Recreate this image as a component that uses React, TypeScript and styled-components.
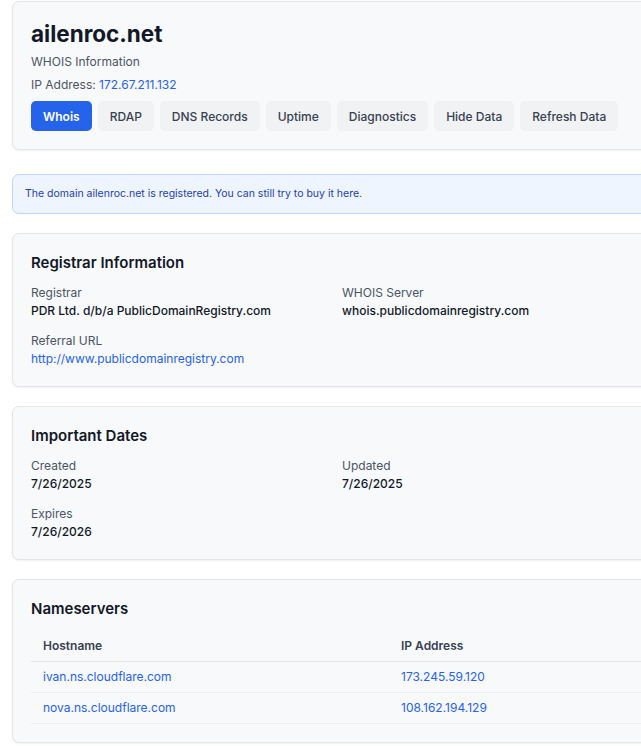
import React from "react";
import styled, { createGlobalStyle } from "styled-components";

const GlobalStyle = createGlobalStyle`
  html, body {
    margin: 0;
    padding: 0;
    background: #ffffff;
    overflow: hidden;
  }
  body {
    font-family: Inter, "Noto Sans", sans-serif;
    color: #111827;
  }
  * {
    box-sizing: border-box;
  }
`;

const StPage = styled.div`
  padding: 1px 0 0 12px;
  width: 700px;
`;

const StCard = styled.section<{ $gap?: number }>`
  width: 660px;
  padding: 18px;
  background: #f8f9fb;
  border: 1px solid #e3e5e9;
  border-radius: 7px;
  box-shadow: 0 1px 2px rgba(16, 24, 40, 0.06);
  margin-bottom: ${({ $gap }) => $gap ?? 19}px;
`;

const StDomain = styled.h1`
  margin: 0;
  font-size: 22.5px;
  line-height: 28px;
  font-weight: 700;
  color: #111827;
`;

const StSub = styled.p`
  margin: 4px 0 0;
  font-size: 12px;
  line-height: 20px;
  color: #4b5563;
`;

const StIpLine = styled.p`
  margin: 3px 0 0;
  font-size: 12px;
  line-height: 20px;
  color: #4b5563;
`;

const StLink = styled.a<{ $plain?: boolean }>`
  color: #2563eb;
  text-decoration: none;
  font-weight: ${({ $plain }) => ($plain ? 400 : "inherit")};
`;

const StTabs = styled.div`
  display: flex;
  gap: 6px;
  margin-top: 6px;
`;

const StTab = styled.button<{ $active?: boolean }>`
  height: 30px;
  padding: 0 12px;
  border: none;
  border-radius: 5px;
  font-family: inherit;
  font-size: 12px;
  font-weight: ${({ $active }) => ($active ? 600 : 500)};
  background: ${({ $active }) => ($active ? "#2563eb" : "#f1f2f4")};
  color: ${({ $active }) => ($active ? "#ffffff" : "#374151")};
  cursor: pointer;
`;

const StAlert = styled.div`
  width: 660px;
  padding: 11px 12px;
  margin-bottom: 19px;
  background: #eef5ff;
  border: 1px solid #bcd7fd;
  border-radius: 7px;
  font-size: 10.5px;
  line-height: 16px;
  color: #1e40af;
`;

const StCardTitle = styled.h2`
  margin: 0 0 10px;
  font-size: 15px;
  line-height: 22px;
  font-weight: 600;
  color: #111827;
`;

const StGrid = styled.dl`
  display: grid;
  grid-template-columns: 1fr 1fr;
  row-gap: 12px;
  margin: 0;
`;

const StField = styled.div`
  display: flex;
  flex-direction: column;
`;

const StLabel = styled.dt`
  font-size: 12px;
  line-height: 18px;
  color: #4b5563;
`;

const StValue = styled.dd`
  margin: 0;
  font-size: 12px;
  line-height: 18px;
  font-weight: 500;
  color: #111827;
`;

const StTable = styled.table`
  width: 100%;
  border-collapse: collapse;
  font-size: 12px;
`;

const StTh = styled.th<{ $width?: number }>`
  width: ${({ $width }) => ($width ? `${$width}px` : "auto")};
  text-align: left;
  padding: 8px 12px 7px;
  line-height: 16px;
  font-weight: 600;
  color: #374151;
  border-bottom: 1px solid #e2e4e8;
`;

const StTd = styled.td`
  padding: 7px 12px;
  line-height: 16px;
  border-bottom: 1px solid #eceef1;
`;

const tabs = ["Whois", "RDAP", "DNS Records", "Uptime", "Diagnostics", "Hide Data", "Refresh Data"];

const nameservers = [
  { host: "ivan.ns.cloudflare.com", ip: "173.245.59.120" },
  { host: "nova.ns.cloudflare.com", ip: "108.162.194.129" },
];

const App = () => {
  return (
    <>
      <GlobalStyle />
      <StPage>
        <StCard $gap={24}>
          <StDomain>ailenroc.net</StDomain>
          <StSub>WHOIS Information</StSub>
          <StIpLine>
            IP Address: <StLink href="#">172.67.211.132</StLink>
          </StIpLine>
          <StTabs>
            {tabs.map((tab, idx) => (
              <StTab key={tab} $active={idx === 0}>
                {tab}
              </StTab>
            ))}
          </StTabs>
        </StCard>

        <StAlert>
          The domain ailenroc.net is registered. You can still try to buy it here.
        </StAlert>

        <StCard>
          <StCardTitle>Registrar Information</StCardTitle>
          <StGrid>
            <StField>
              <StLabel>Registrar</StLabel>
              <StValue>PDR Ltd. d/b/a PublicDomainRegistry.com</StValue>
            </StField>
            <StField>
              <StLabel>WHOIS Server</StLabel>
              <StValue>whois.publicdomainregistry.com</StValue>
            </StField>
            <StField>
              <StLabel>Referral URL</StLabel>
              <StValue>
                <StLink href="#" $plain>
                  http://www.publicdomainregistry.com
                </StLink>
              </StValue>
            </StField>
          </StGrid>
        </StCard>

        <StCard>
          <StCardTitle>Important Dates</StCardTitle>
          <StGrid>
            <StField>
              <StLabel>Created</StLabel>
              <StValue>7/26/2025</StValue>
            </StField>
            <StField>
              <StLabel>Updated</StLabel>
              <StValue>7/26/2025</StValue>
            </StField>
            <StField>
              <StLabel>Expires</StLabel>
              <StValue>7/26/2026</StValue>
            </StField>
          </StGrid>
        </StCard>

        <StCard>
          <StCardTitle>Nameservers</StCardTitle>
          <StTable>
            <thead>
              <tr>
                <StTh $width={358}>Hostname</StTh>
                <StTh>IP Address</StTh>
              </tr>
            </thead>
            <tbody>
              {nameservers.map((ns) => (
                <tr key={ns.host}>
                  <StTd>
                    <StLink href="#">{ns.host}</StLink>
                  </StTd>
                  <StTd>
                    <StLink href="#">{ns.ip}</StLink>
                  </StTd>
                </tr>
              ))}
            </tbody>
          </StTable>
        </StCard>
      </StPage>
    </>
  );
};

export default App;
